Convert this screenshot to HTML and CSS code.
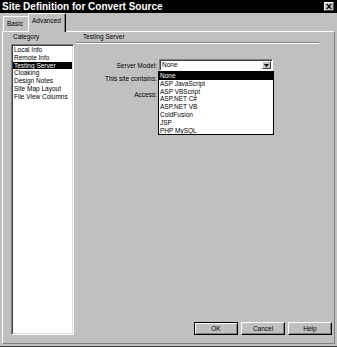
FILE: index.html
```html
<!DOCTYPE html>
<html>
<head>
<meta charset="utf-8">
<link rel="stylesheet" href="styles.css">
</head>
<body>
<div class="window">
  <div class="titlebar">
    <span class="title">Site Definition for Convert Source</span>
    <span class="close"><svg width="6" height="5" viewBox="0 0 6 5"><path d="M0 0h1.5l1.5 1.6L4.5 0H6L3.8 2.5 6 5H4.5L3 3.4 1.5 5H0l2.2-2.5z" fill="#000"/></svg></span>
  </div>
  <div class="tabs">
    <div class="tab">Basic</div>
    <div class="tab active">Advanced</div>
  </div>
  <div class="panel">
    <div class="left">
      <div class="label">Category</div>
      <div class="listbox">
        <div class="item">Local Info</div>
        <div class="item">Remote Info</div>
        <div class="item selected">Testing Server</div>
        <div class="item">Cloaking</div>
        <div class="item">Design Notes</div>
        <div class="item">Site Map Layout</div>
        <div class="item">File View Columns</div>
      </div>
    </div>
    <div class="right">
      <div class="section">Testing Server</div>
      <div class="groove"></div>
      <div class="row first">
        <div class="rlabel">Server Model:</div>
        <div class="select">
          <span class="value">None</span>
          <span class="arrow"><svg width="5" height="3" viewBox="0 0 5 3"><path d="M0 0h5L2.5 3z" fill="#000"/></svg></span>
          <div class="dropdown">
            <div class="opt selected">None</div>
            <div class="opt">ASP JavaScript</div>
            <div class="opt">ASP VBScript</div>
            <div class="opt">ASP.NET C#</div>
            <div class="opt">ASP.NET VB</div>
            <div class="opt">ColdFusion</div>
            <div class="opt">JSP</div>
            <div class="opt">PHP MySQL</div>
          </div>
        </div>
      </div>
      <div class="row second">
        <div class="rlabel">This site contains:</div>
      </div>
      <div class="row third">
        <div class="rlabel">Access:</div>
      </div>
      <div class="buttons">
        <div class="btn default">OK</div>
        <div class="btn">Cancel</div>
        <div class="btn">Help</div>
      </div>
    </div>
  </div>
</div>
</body>
</html>
```

FILE: styles.css
```css
html, body {
  margin: 0;
  padding: 0;
  background: #c0c0c0;
}

.window {
  width: 337px;
  height: 347px;
  box-sizing: border-box;
  background: #c0c0c0;
  display: flex;
  flex-direction: column;
  font-family: "Liberation Sans", Arial, sans-serif;
  font-size: 6.5px;
  color: #000;
  border-bottom: 1px solid #404040;
}

.titlebar {
  height: 13px;
  flex: none;
  background: #000;
  color: #fff;
  display: flex;
  align-items: center;
  justify-content: space-between;
  padding: 0 3px 0 2px;
}

.title {
  font-size: 10px;
  font-weight: bold;
  line-height: 13px;
}

.close {
  width: 10px;
  height: 9px;
  box-sizing: border-box;
  background: #c0c0c0;
  border-top: 1px solid #fff;
  border-left: 1px solid #fff;
  border-right: 1px solid #404040;
  border-bottom: 1px solid #404040;
  display: flex;
  align-items: center;
  justify-content: center;
}

.tabs {
  height: 18px;
  flex: none;
  display: flex;
  align-items: flex-end;
  padding-left: 3px;
}

.tab {
  height: 15px;
  box-sizing: border-box;
  border-top: 1px solid #fff;
  border-left: 1px solid #fff;
  border-right: 1px solid #404040;
  padding: 0 3px 0 3px;
  line-height: 13px;
  width: 26px;
}

.tab.active {
  height: 19px;
  width: 38px;
  margin-left: -1px;
  margin-bottom: -1px;
  position: relative;
  z-index: 1;
  background: #c0c0c0;
  line-height: 14px;
  padding-left: 3px;
  border-right: 1px solid #000;
  box-shadow: inset -1px 0 0 #808080;
}

.panel {
  flex: 1;
  margin: 0 2px 2px 2px;
  border-top: 1px solid #fff;
  border-left: 1px solid #fff;
  border-right: 1px solid #808080;
  border-bottom: 1px solid #808080;
  display: flex;
  gap: 2px;
  padding: 1px 2px 8px 8px;
}

.left {
  width: 63px;
  display: flex;
  flex-direction: column;
}

.label {
  line-height: 8px;
  padding-left: 2px;
}

.listbox {
  flex: 1;
  margin-top: 3px;
  background: #fff;
  border-top: 1px solid #808080;
  border-left: 1px solid #808080;
  border-right: 1px solid #fff;
  border-bottom: 1px solid #fff;
  box-shadow: inset 1px 1px 0 #404040, inset -1px -1px 0 #dcdcdc;
  padding: 1px 1px;
}

.item {
  line-height: 7.8px;
  padding-left: 1px;
  white-space: nowrap;
}

.item.selected {
  background: #000;
  color: #fff;
}

.right {
  flex: 1;
  display: flex;
  flex-direction: column;
}

.section {
  line-height: 8px;
  padding-left: 7px;
}

.groove {
  height: 0;
  border-top: 1px solid #808080;
  border-bottom: 1px solid #fff;
  margin: 1px 13px 0 0;
}

.row {
  display: flex;
  align-items: center;
}

.row.first {
  margin-top: 15px;
  height: 12px;
}

.row.second {
  margin-top: 4px;
  line-height: 8px;
}

.row.third {
  margin-top: 8px;
  line-height: 8px;
}

.rlabel {
  width: 81px;
  text-align: right;
  white-space: nowrap;
}

.select {
  margin-left: 2px;
  width: 114px;
  height: 12px;
  box-sizing: border-box;
  background: #fff;
  border-top: 1px solid #808080;
  border-left: 1px solid #808080;
  border-right: 1px solid #fff;
  border-bottom: 1px solid #fff;
  box-shadow: inset 1px 1px 0 #404040;
  display: flex;
  align-items: center;
  justify-content: space-between;
  padding: 0 1px 0 2px;
  position: relative;
}

.value {
  line-height: 8px;
}

.arrow {
  width: 9px;
  height: 8px;
  box-sizing: border-box;
  background: #c0c0c0;
  border-top: 1px solid #fff;
  border-left: 1px solid #fff;
  border-right: 1px solid #404040;
  border-bottom: 1px solid #404040;
  display: flex;
  align-items: center;
  justify-content: center;
}

.dropdown {
  position: absolute;
  top: 11px;
  left: -2px;
  width: 116px;
  box-sizing: border-box;
  background: #fff;
  border: 1px solid #000;
  z-index: 2;
}

.opt {
  line-height: 7.8px;
  padding-left: 1px;
  white-space: nowrap;
}

.opt.selected {
  background: #000;
  color: #fff;
}

.buttons {
  margin-top: auto;
  display: flex;
  justify-content: flex-end;
  gap: 3px;
}

.btn {
  width: 44px;
  height: 13px;
  box-sizing: border-box;
  border-top: 1px solid #fff;
  border-left: 1px solid #fff;
  border-right: 1px solid #000;
  border-bottom: 1px solid #000;
  box-shadow: inset -1px -1px 0 #808080;
  text-align: center;
  line-height: 11px;
}

.btn.default {
  border: 1px solid #000;
  box-shadow: inset 1px 1px 0 #fff, inset -1px -1px 0 #808080;
}
```
